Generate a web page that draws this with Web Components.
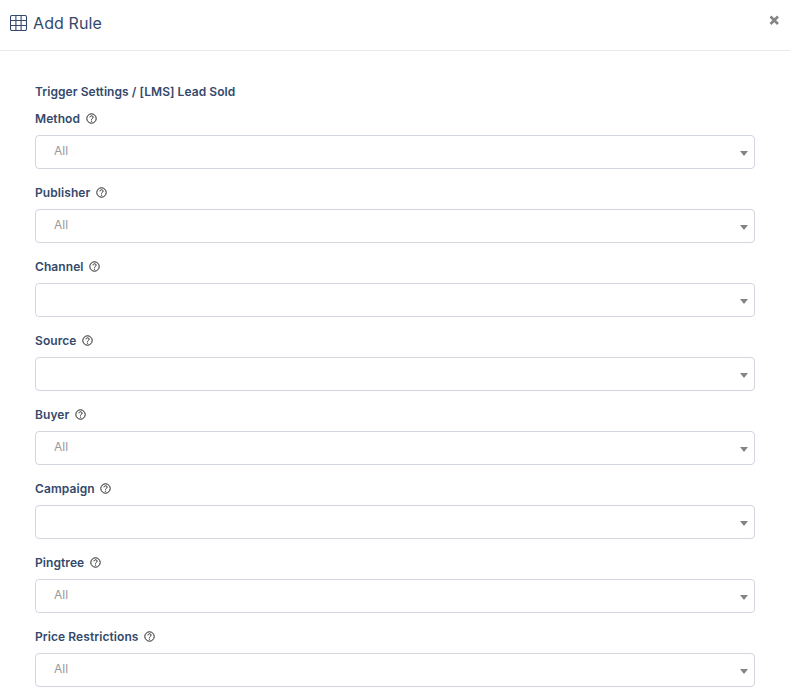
<!DOCTYPE html>
<html lang="en"><head><meta charset="utf-8"><title>Add Rule</title>
<style>
html,body{margin:0;padding:0;background:#fff;overflow:hidden;height:698px}
body{font-family:Inter,"Liberation Sans",sans-serif;color:#34496b}
</style></head><body>
<template id="t-header">
<style>
:host{display:flex;align-items:center;box-sizing:border-box;height:51px;border-bottom:1px solid #e7e9ec;padding:0 10px;gap:5px;position:relative}
svg.g{width:18px;height:16px;flex:none;margin-top:-5px}
h1{margin:0;font:400 16px/20px Inter,sans-serif;letter-spacing:.12px;color:#34496b;margin-top:-5px}
.x{position:absolute;right:10px;top:15px;width:11px;height:11px}
</style>
<svg class="g" viewBox="0 0 18 16" fill="none" stroke="#34496b" stroke-width="1.1"><rect x=".5" y=".5" width="16" height="15" rx="1.5"/><path d="M.5 5.5h16M.5 10.5h16M5.9 .5v15M11.1 .5v15"/></svg>
<h1><slot></slot></h1>
<svg class="x" viewBox="0 0 11 11"><path d="M1.5 1.5l7.5 7.5M9 1.5L1.5 9" stroke="#848484" stroke-width="2.6" stroke-linecap="butt"/></svg>
</template>
<template id="t-field">
<style>
:host{display:block;height:74px}
.l{display:flex;align-items:center;gap:6px;height:17px;font:600 12px/17px Inter,sans-serif;letter-spacing:.08px;color:#34496b}
.q{width:11px;height:11px;flex:none;margin-left:-.5px}
.s{box-sizing:border-box;height:34px;margin-top:8px;border:1px solid #d2d6de;border-radius:4px;padding:0 18px;display:flex;align-items:center;justify-content:space-between;font:400 12px/16px Inter,sans-serif;color:#999;position:relative}
.v{margin-top:-3px;min-height:16px}
.a{position:absolute;right:6px;top:15px;width:0;height:0;border-left:4px solid transparent;border-right:4px solid transparent;border-top:5px solid #848484}
</style>
<div class="l"><span><slot></slot></span>
<svg class="q" viewBox="0 0 11 11" fill="none" stroke="#222"><circle cx="5.5" cy="5.5" r="4.7" stroke-width="1"/><path d="M4 4.3c0-2 3.1-2 3.1-.1 0 1.2-1.6 1.2-1.6 2.4" stroke-width="1"/><circle cx="5.5" cy="8.1" r=".7" fill="#222" stroke="none"/></svg></div>
<div class="s"><span class="v"></span><i class="a"></i></div>
</template>
<template id="t-form">
<style>:host{display:block;padding:32px 35px 0}
.h{font:600 12px/17px Inter,sans-serif;letter-spacing:.06px;color:#34496b;margin-bottom:10px}
</style>
<div class="h"><slot name="heading"></slot></div><slot></slot>
</template>
<rule-header>Add Rule</rule-header>
<rule-form><span slot="heading">Trigger Settings / [LMS] Lead Sold</span>
<rule-field value="All">Method</rule-field>
<rule-field value="All">Publisher</rule-field>
<rule-field>Channel</rule-field>
<rule-field>Source</rule-field>
<rule-field value="All">Buyer</rule-field>
<rule-field>Campaign</rule-field>
<rule-field value="All">Pingtree</rule-field>
<rule-field value="All">Price Restrictions</rule-field>
</rule-form>
<script>
function def(n,id,init){customElements.define(n,class extends HTMLElement{connectedCallback(){if(this.shadowRoot)return;const r=this.attachShadow({mode:'open'});r.appendChild(document.getElementById(id).content.cloneNode(true));if(init)init(this,r);}});}
def('rule-header','t-header');
def('rule-form','t-form');
def('rule-field','t-field',(h,r)=>{r.querySelector('.v').textContent=h.getAttribute('value')||'';});
</script>
</body></html>
